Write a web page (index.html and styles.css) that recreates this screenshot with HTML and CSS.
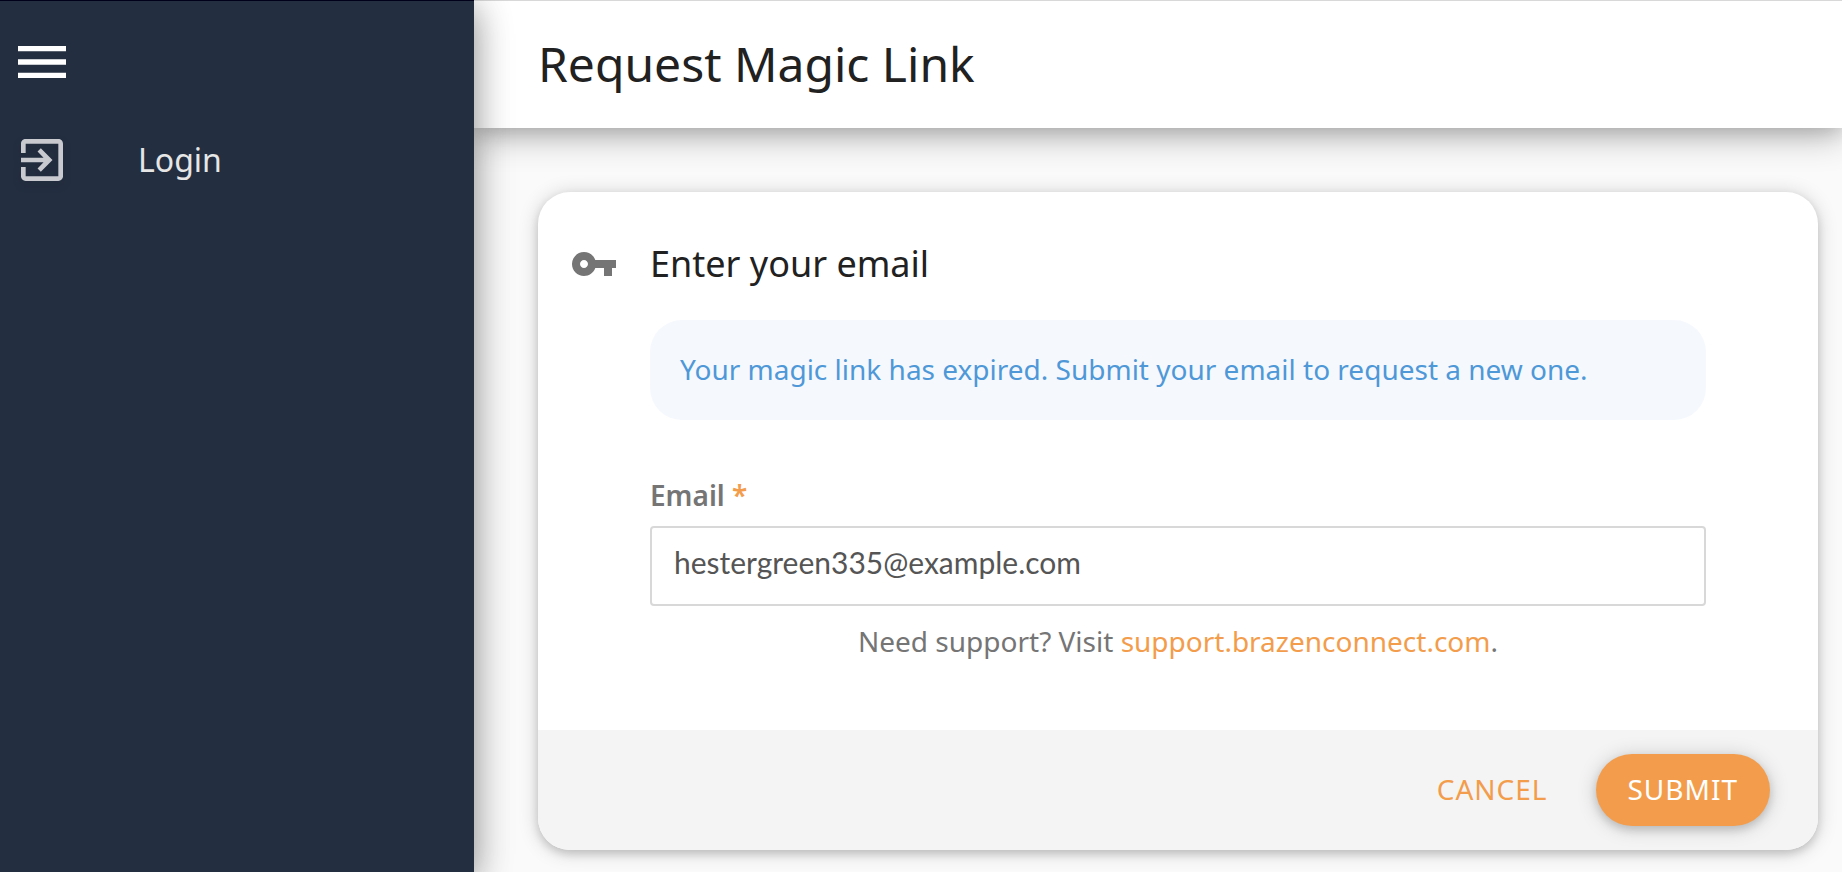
FILE: index.html
```html
<!DOCTYPE html>
<html lang="en">
<head>
    <meta charset="UTF-8">
    <meta name="viewport" content="width=device-width, initial-scale=1">
    <title>Request Magic Link</title>
    <link rel="stylesheet" href="styles.css">
</head>
<body>
    <nav class="sidebar">
        <button type="button" class="menu-button" aria-label="Menu">
            <svg viewBox="0 0 24 24"><path d="M3 18h18v-2H3v2zm0-5h18v-2H3v2zm0-7v2h18V6H3z"/></svg>
        </button>
        <a href="#" class="nav-link">
            <svg viewBox="0 0 24 24"><path d="M10.09 15.59L11.5 17l5-5-5-5-1.41 1.41L12.67 11H3v2h9.67l-2.58 2.59zM19 3H5c-1.11 0-2 .9-2 2v4h2V5h14v14H5v-4H3v4c0 1.1.89 2 2 2h14c1.1 0 2-.9 2-2V5c0-1.1-.9-2-2-2z"/></svg>
            <span>Login</span>
        </a>
    </nav>

    <div class="page">
        <header class="page-header">
            <h1>Request Magic Link</h1>
        </header>

        <main>
            <form class="card">
                <div class="card-title">
                    <svg viewBox="0 0 24 24"><path d="M12.65 10C11.83 7.67 9.61 6 7 6c-3.31 0-6 2.69-6 6s2.69 6 6 6c2.61 0 4.83-1.67 5.65-4H17v4h4v-4h2v-4H12.65zM7 14c-1.1 0-2-.9-2-2s.9-2 2-2 2 .9 2 2-.9 2-2 2z"/></svg>
                    <h2>Enter your email</h2>
                </div>

                <div class="card-body">
                    <p class="message">Your magic link has expired. Submit your email to request a new one.</p>
                    <label for="email">Email <span class="required">*</span></label>
                    <input type="email" name="email" id="email" value="hestergreen335@example.com">
                    <p class="support">Need support? Visit <a href="#">support.brazenconnect.com</a>.</p>
                </div>

                <div class="card-actions">
                    <button type="button" class="btn">CANCEL</button>
                    <button type="button" class="btn btn-primary">SUBMIT</button>
                </div>
            </form>
        </main>
    </div>
</body>
</html>
```
FILE: styles.css
```css
* {
    box-sizing: border-box;
}

body {
    display: flex;
    margin: 0;
    min-height: 100vh;
    background-color: #fafafa;
    color: #212121;
    font-family: "Noto Sans", sans-serif;
    font-size: 28px;
    line-height: 40px;
}

h1, h2, p {
    margin: 0;
    font-weight: 400;
}

svg {
    display: block;
    fill: currentColor;
}

/* Sidebar */
.sidebar {
    position: relative;
    z-index: 2;
    flex: 0 0 474px;
    padding: 29px 10px;
    border-top: 1px solid #00001a;
    background-color: #232e40;
    box-shadow: 0 8px 32px rgba(0, 0, 0, 0.3), 0 8px 40px rgba(0, 0, 0, 0.2);
}

.menu-button {
    display: block;
    padding: 0;
    border: none;
    background: none;
    color: #fff;
    cursor: pointer;
}

.menu-button svg {
    width: 64px;
    height: 64px;
}

.nav-link {
    display: flex;
    align-items: center;
    gap: 68px;
    margin-top: 38px;
    padding-left: 4px;
    color: #e6e6e6;
    font-size: 32px;
    text-decoration: none;
}

.nav-link svg {
    width: 56px;
    height: 56px;
    color: #c8cad0;
    filter: drop-shadow(0 4px 4px rgba(0, 0, 0, 0.1));
}

/* Page */
.page {
    flex: 1;
    min-width: 0;
}

.page-header {
    position: relative;
    z-index: 1;
    padding: 31px 64px 32px;
    border-top: 1px solid #d8d8d8;
    background-color: #fff;
    box-shadow: 0 8px 32px rgba(0, 0, 0, 0.3), 0 4px 16px rgba(0, 0, 0, 0.1);
}

h1 {
    font-size: 48px;
    line-height: 64px;
}

main {
    padding: 64px 24px 22px 64px;
}

/* Card */
.card {
    border-radius: 32px;
    background-color: #fff;
    box-shadow: 0 4px 8px rgba(0, 0, 0, 0.14), 0 2px 20px rgba(0, 0, 0, 0.18);
}

.card-title {
    display: flex;
    align-items: center;
    gap: 32px;
    padding: 48px 32px 32px;
}

.card-title svg {
    width: 48px;
    height: 48px;
    color: #757575;
}

h2 {
    font-size: 36px;
    line-height: 48px;
}

.card-body {
    padding: 0 112px 69px;
    color: #757575;
}

.message {
    margin-bottom: 55px;
    padding: 29px 30px 31px;
    border-radius: 32px;
    background-color: #f5f8fd;
    color: #4f98d8;
}

label {
    display: block;
    margin-bottom: 11px;
    font-weight: 600;
}

.required,
.support a {
    color: #f39d4c;
}

.support a {
    text-decoration: none;
}

input {
    display: block;
    width: 100%;
    height: 80px;
    padding: 0 22px 8px;
    border: 2px solid #d8d8d8;
    border-radius: 4px;
    background-color: #fff;
    color: #555;
    font-family: Lato, sans-serif;
    font-size: 30px;
}

.support {
    margin-top: 15px;
    text-align: center;
}

.card-actions {
    display: flex;
    justify-content: flex-end;
    gap: 16px;
    padding: 24px 48px;
    border-radius: 0 0 32px 32px;
    background-color: #f4f4f4;
}

.btn {
    height: 72px;
    padding: 0 32px 2px;
    border: none;
    border-radius: 36px;
    background: none;
    color: #f39d4c;
    font: inherit;
    letter-spacing: 1px;
    cursor: pointer;
}

.btn-primary {
    background-color: #f39d4c;
    color: #fff;
    box-shadow: 0 4px 8px rgba(0, 0, 0, 0.14), 0 2px 20px rgba(0, 0, 0, 0.18);
}
```
